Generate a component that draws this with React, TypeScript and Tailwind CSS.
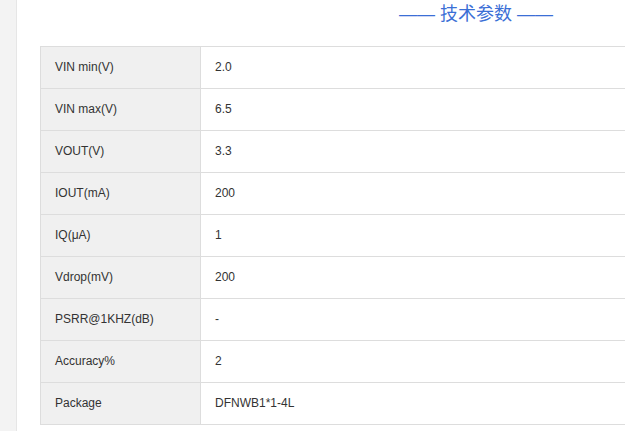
import React from 'react'

const rows: [string, string][] = [
  ['VIN min(V)', '2.0'],
  ['VIN max(V)', '6.5'],
  ['VOUT(V)', '3.3'],
  ['IOUT(mA)', '200'],
  ['IQ(μA)', '1'],
  ['Vdrop(mV)', '200'],
  ['PSRR@1KHZ(dB)', '-'],
  ['Accuracy%', '2'],
  ['Package', 'DFNWB1*1-4L'],
]

export default function App() {
  return (
    <div className="flex h-[431px] w-[625px] overflow-hidden bg-white font-['Liberation_Sans',Arial,sans-serif]">
      <div className="w-[17px] shrink-0 border-r border-[#e6e6e6] bg-[#f3f3f3]" />
      <div className="shrink-0 pl-[23px]">
        <div className="flex h-[46px] w-[872px] justify-center">
          <h2 className="text-[18px] leading-[28px] text-[#3b6fd6] font-['Liberation_Sans','Noto_Sans_CJK_SC',sans-serif] font-normal">
            —— 技术参数 ——
          </h2>
        </div>
        <table className="w-[872px] border-collapse text-[12px] text-[#333]">
          <tbody>
            {rows.map(([label, value]) => (
              <tr key={label} className="h-[42px]">
                <td className="w-[160px] border border-[#dddddd] bg-[#f0f0f0] px-[14px] pb-[1px]">{label}</td>
                <td className="border border-[#dddddd] px-[14px] pb-[1px]">{value}</td>
              </tr>
            ))}
          </tbody>
        </table>
      </div>
    </div>
  )
}
